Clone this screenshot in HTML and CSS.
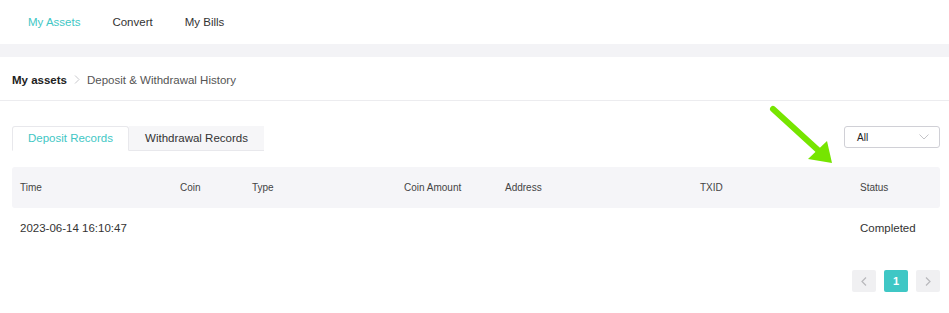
FILE: index.html
```html
<!DOCTYPE html>
<html lang="en">
<head>
    <meta charset="UTF-8" />
    <meta name="viewport" content="width=device-width, initial-scale=1.0" />
    <title>Deposit &amp; Withdrawal History</title>
    <link rel="stylesheet" href="styles.css">
</head>
<body>
    <nav class="topnav">
        <a class="active">My Assets</a>
        <a>Convert</a>
        <a>My Bills</a>
    </nav>
    <div class="band"></div>

    <div class="panel">
        <div class="crumbs">
            <b>My assets</b>
            <svg class="sep" width="6" height="9" viewBox="0 0 6 9"><path d="M1 0.5 L5 4.5 L1 8.5" fill="none" stroke="#c8c8cc" stroke-width="1"/></svg>
            <span>Deposit &amp; Withdrawal History</span>
        </div>

        <div class="content">
            <div class="toolbar">
                <div class="tabs">
                    <div class="tab current">Deposit Records</div>
                    <div class="tab">Withdrawal Records</div>
                </div>
                <div class="select">
                    <span>All</span>
                    <svg width="10" height="6" viewBox="0 0 10 6"><path d="M0.5 0.5 L5 5 L9.5 0.5" fill="none" stroke="#c4c4c8" stroke-width="1"/></svg>
                </div>
            </div>

            <div class="table">
                <div class="row head">
                    <div>Time</div>
                    <div>Coin</div>
                    <div>Type</div>
                    <div>Coin Amount</div>
                    <div>Address</div>
                    <div>TXID</div>
                    <div>Status</div>
                </div>
                <div class="row">
                    <div>2023-06-14 16:10:47</div>
                    <div></div>
                    <div></div>
                    <div></div>
                    <div></div>
                    <div></div>
                    <div>Completed</div>
                </div>
            </div>

            <div class="pager">
                <div class="page"><svg width="6" height="9" viewBox="0 0 6 9"><path d="M5 0.5 L1 4.5 L5 8.5" fill="none" stroke="#b8b8bc" stroke-width="1.2"/></svg></div>
                <div class="page on">1</div>
                <div class="page"><svg width="6" height="9" viewBox="0 0 6 9"><path d="M1 0.5 L5 4.5 L1 8.5" fill="none" stroke="#b8b8bc" stroke-width="1.2"/></svg></div>
            </div>
        </div>
    </div>

    <!-- annotation arrow -->
    <svg class="arrow" width="75" height="70" viewBox="0 0 75 70">
        <line x1="8" y1="9" x2="54" y2="51" stroke="#76e500" stroke-width="6" stroke-linecap="round"/>
        <polygon points="62,41 67,63 43,59" fill="#76e500"/>
    </svg>
</body>
</html>
```

FILE: styles.css
```css
* {
    box-sizing: border-box;
}
body {
    margin: 0;
    font-family: 'Liberation Sans', Arial, sans-serif;
    color: #333;
    background: #fff;
    position: relative;
}
.topnav {
    height: 44px;
    display: flex;
    align-items: center;
    gap: 32px;
    padding-left: 28px;
    font-size: 11.5px;
}
.topnav a {
    color: #333;
}
.topnav a.active {
    color: #3fc7c5;
}
.band {
    height: 13px;
    background: #f3f3f6;
}
.crumbs {
    height: 44px;
    display: flex;
    align-items: center;
    gap: 7px;
    padding: 2px 12px 0;
    border-bottom: 1px solid #ececef;
    font-size: 11.5px;
}
.crumbs b {
    color: #222;
}
.crumbs span {
    color: #555;
}
.content {
    padding: 25px 9px 0 12px;
}
.toolbar {
    display: flex;
    justify-content: space-between;
    align-items: flex-start;
}
.tabs {
    display: flex;
}
.tab {
    width: 135px;
    height: 25px;
    line-height: 24px;
    text-align: center;
    font-size: 11.5px;
    color: #333;
    background: #f6f6f8;
    border-bottom: 1px solid #e8e8ec;
}
.tab.current {
    width: 117px;
    color: #3fc7c5;
    background: #fff;
    border: 1px solid #e8e8ec;
    border-bottom: 1px solid #fff;
    border-radius: 3px 3px 0 0;
    line-height: 23px;
}
.select {
    width: 96px;
    height: 22px;
    border: 1px solid #d0d0d6;
    border-radius: 3px;
    display: flex;
    align-items: center;
    justify-content: space-between;
    padding: 0 10px 0 12px;
    font-size: 10px;
    color: #222;
}
.table {
    margin-top: 16px;
}
.row {
    display: grid;
    grid-template-columns: 160px 72px 152px 101px 195px 160px 88px;
    align-items: center;
    height: 39px;
    font-size: 11.5px;
    color: #333;
}
.row > div {
    padding-left: 8px;
}
.row.head {
    height: 41px;
    background: #f5f5f8;
    border-radius: 3px;
    font-size: 10px;
    color: #444;
}
.pager {
    display: flex;
    justify-content: flex-end;
    gap: 8px;
    margin-top: 23px;
}
.page {
    width: 24px;
    height: 22px;
    background: #f0f0f2;
    border-radius: 2px;
    display: flex;
    align-items: center;
    justify-content: center;
    font-size: 11px;
    font-weight: bold;
    color: #fff;
}
.page.on {
    background: #3fc7c5;
}
.arrow {
    position: absolute;
    left: 765px;
    top: 100px;
}
```
